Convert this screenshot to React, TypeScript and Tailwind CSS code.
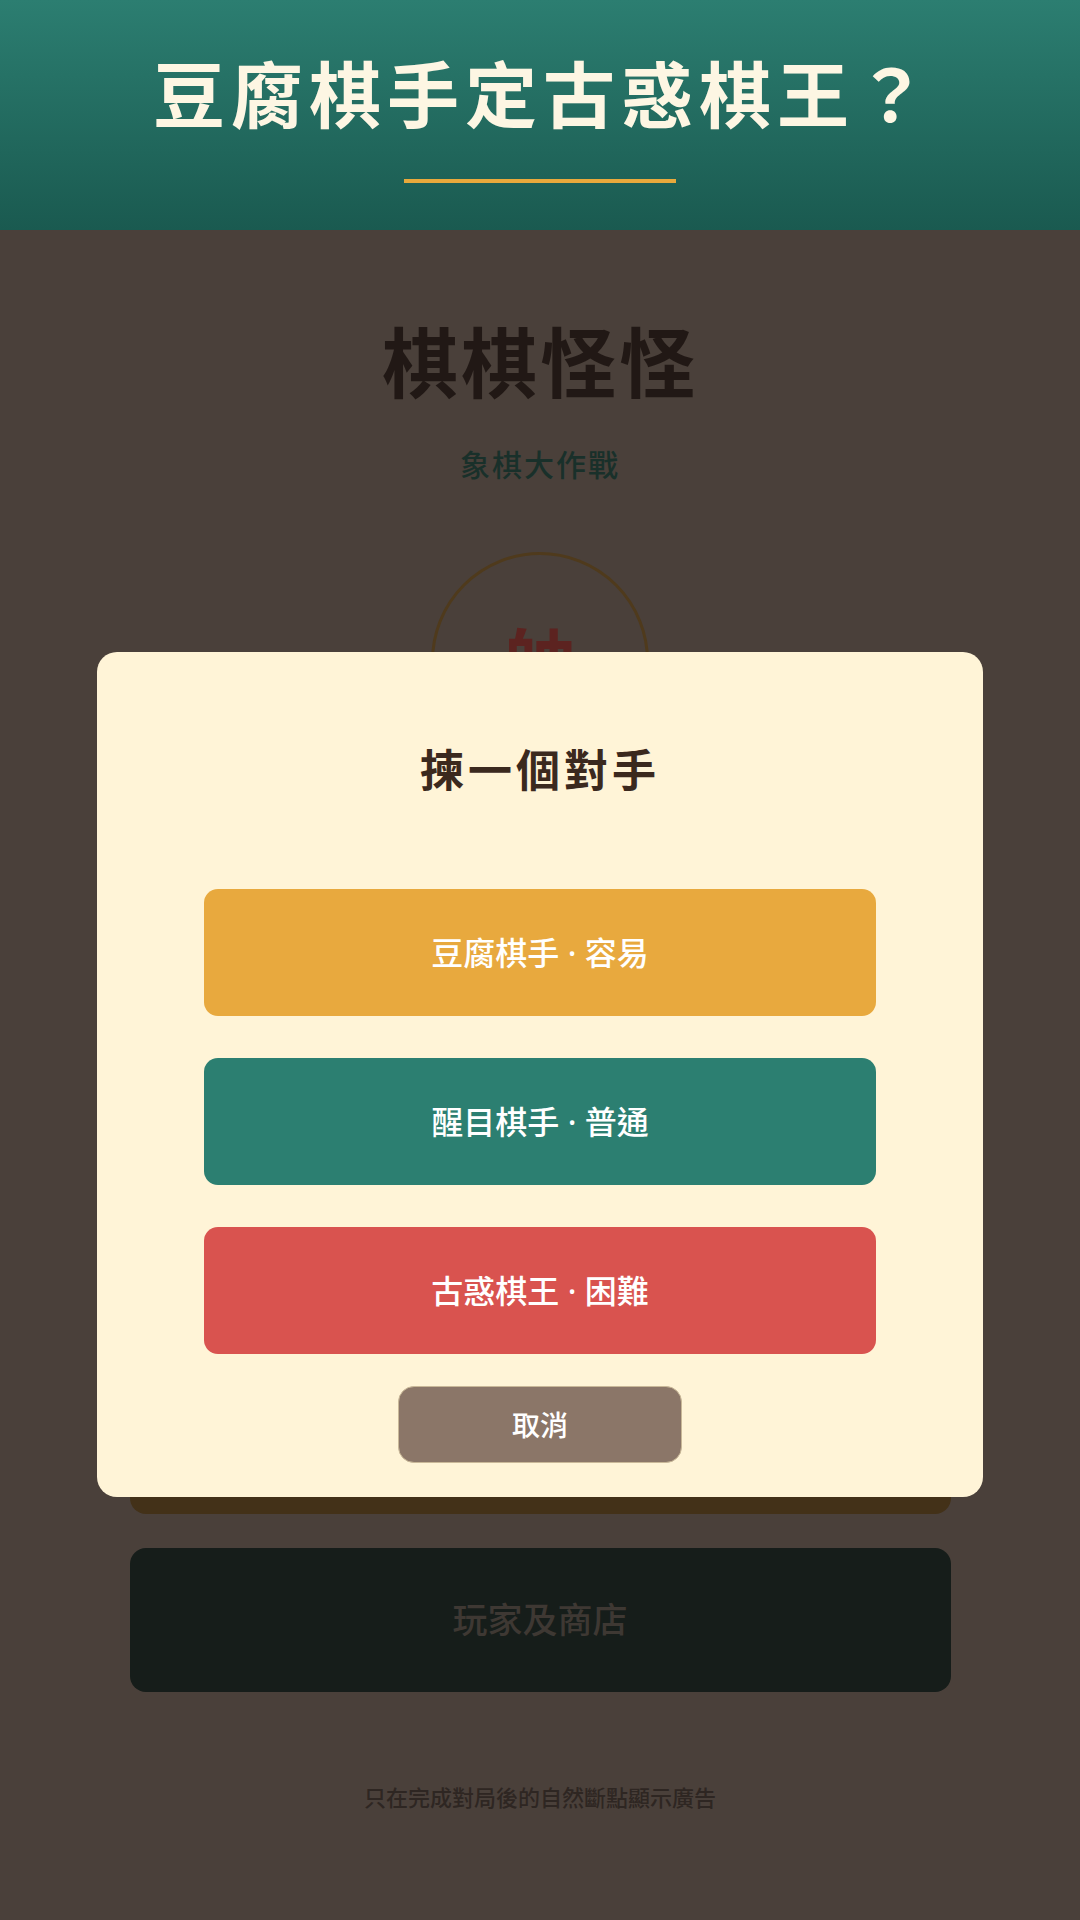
import React from 'react';

const levels = [
  { label: '豆腐棋手 · 容易', color: 'bg-[#e8a93e]' },
  { label: '醒目棋手 · 普通', color: 'bg-[#2c7f71]' },
  { label: '古惑棋王 · 困難', color: 'bg-[#d9534f]' },
];

function OpponentModal() {
  return (
    <div className="absolute left-[97px] top-[652px] w-[886px] h-[845px] bg-[#fff4d7] rounded-[20px] flex flex-col items-center pt-[96px]">
      {/* Modal title */}
      <h2 className="text-[44px] leading-none font-bold tracking-[4px] text-[#3b291e]">揀一個對手</h2>

      {/* Difficulty buttons */}
      <div className="mt-[97px] flex flex-col gap-[42px]">
        {levels.map((lv) => (
          <button
            key={lv.label}
            className={`${lv.color} w-[672px] h-[127px] rounded-[14px] text-white text-[32px] font-medium flex items-center justify-center`}
          >
            {lv.label}
          </button>
        ))}
      </div>

      {/* Cancel */}
      <button className="mt-[32px] w-[284px] h-[77px] rounded-[16px] bg-[#8b7668] border border-[#c9b898] text-white text-[28px] font-medium flex items-center justify-center">
        取消
      </button>
    </div>
  );
}

export default function App() {
  return (
    <div className="relative w-[1080px] min-h-[1920px] bg-[#4a403a] font-['Noto_Sans','Noto_Sans_CJK_TC','Noto_Sans_CJK_SC',sans-serif] overflow-hidden">
      {/* Header */}
      <header className="h-[230px] bg-gradient-to-b from-[#2c7e71] to-[#1a5a50] flex flex-col items-center pt-[58px]">
        <h1 className="text-[72px] leading-none font-bold tracking-[6px] text-[#fdf6e3] pl-[6px]">豆腐棋手定古惑棋王？</h1>
        <div className="mt-[49px] w-[272px] h-[4px] bg-[#e8a93c]"></div>
      </header>

      {/* Dimmed page content */}
      <main className="flex flex-col items-center">
        <div className="mt-[95px] text-[76px] leading-none font-bold tracking-[3px] text-[#211815]">棋棋怪怪</div>
        <div className="mt-[49px] text-[30px] leading-none font-medium tracking-[2px] text-[#19302a]">象棋大作戰</div>

        {/* General piece */}
        <div className="mt-[72px] w-[218px] h-[218px] rounded-full border-[3px] border-[#4f3a1c] flex items-center justify-center">
          <span className="text-[72px] leading-none font-bold text-[#5c2320]">帥</span>
        </div>

        {/* Start button (behind modal) */}
        <div className="mt-[600px] w-[821px] h-[144px] rounded-[16px] bg-[#433118]"></div>

        {/* Players and shop */}
        <div className="mt-[34px] w-[821px] h-[144px] rounded-[16px] bg-[#161d1a] flex items-center justify-center">
          <span className="text-[35px] font-medium text-[#3e3833]">玩家及商店</span>
        </div>

        <p className="mt-[94px] text-[22px] leading-none font-medium text-[#2e2622]">只在完成對局後的自然斷點顯示廣告</p>
      </main>

      <OpponentModal />
    </div>
  );
}
